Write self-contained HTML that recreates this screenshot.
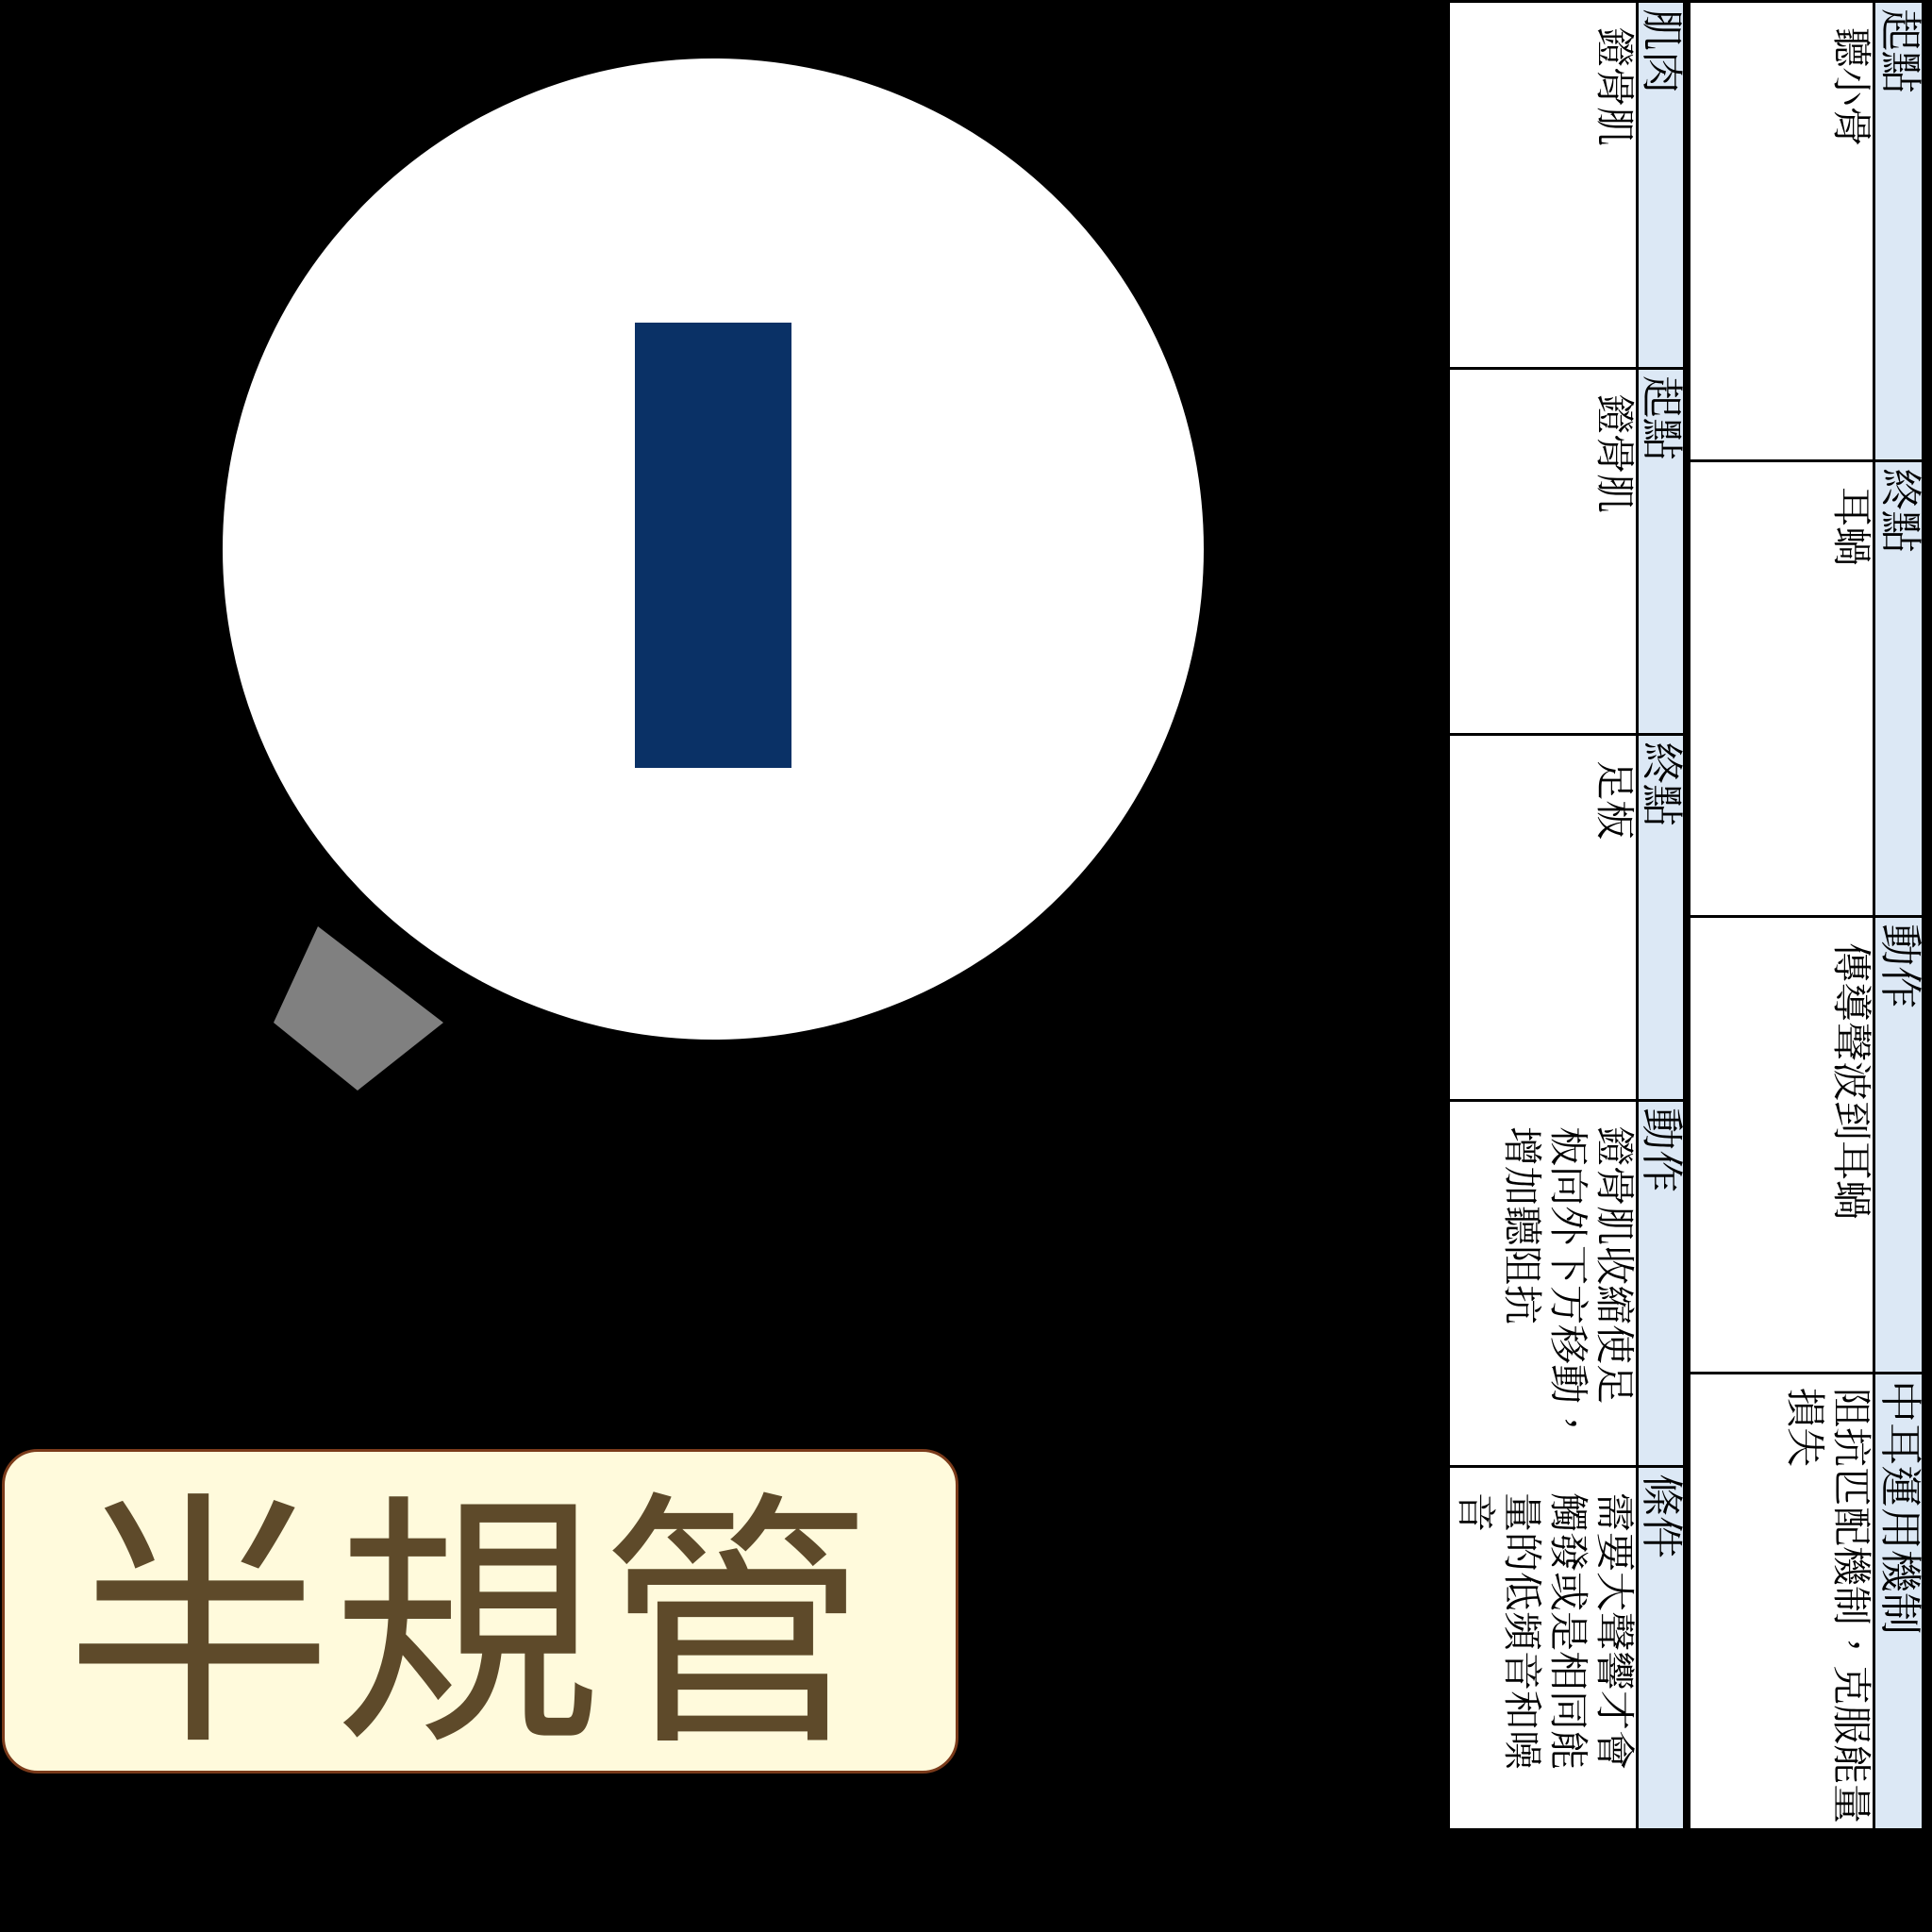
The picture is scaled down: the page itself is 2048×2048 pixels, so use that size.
<!DOCTYPE html>
<html><head><meta charset="utf-8"><style>
html,body{margin:0;padding:0;background:#000;width:2048px;height:2048px;overflow:hidden;position:relative}
.circle{position:absolute;left:236px;top:62px;width:1040px;height:1040px;border-radius:50%;background:#fff}
.bar{position:absolute;left:673px;top:342px;width:166px;height:472px;background:#0a3166}
.label{position:absolute;left:2px;top:1536px;width:1014px;height:344px;background:#fffadc;border:3px solid #7a3a1a;border-radius:38px;box-sizing:border-box}
.label span{position:absolute;left:64px;top:36px;font-family:"Liberation Sans","Noto Sans CJK TC",sans-serif;font-size:284px;line-height:300px;color:#5e4a2a;white-space:nowrap}
.tbl{position:absolute;top:0;transform-origin:0 0;transform:rotate(90deg);border-collapse:collapse;table-layout:fixed;font-family:"Liberation Serif","Noto Serif CJK TC","Noto Serif CJK SC",serif;background:#fff}
.tbl td{border:3px solid #000;vertical-align:top;padding:0 2px 0 26px;font-size:42px;line-height:49px;color:#000;white-space:nowrap;overflow:hidden}
.tbl tr.h td{background:#dce8f5;font-size:45px;line-height:46px;padding-left:6px}
</style></head><body>
<div class="circle"></div>
<div class="bar"></div>
<svg style="position:absolute;left:0;top:0" width="2048" height="2048"><polygon points="337,982 290,1084 379,1156 470,1084" fill="#808080"/></svg>
<div class="label"><span>半規管</span></div>

<table class="tbl" style="left:2040px;width:1938px;height:248px">
<colgroup><col style="width:487px"><col style="width:483px"><col style="width:484px"><col style="width:484px"></colgroup>
<tr class="h" style="height:52px"><td>起點</td><td>終點</td><td>動作</td><td>中耳運用機制</td></tr>
<tr style="height:196px"><td>聽小骨</td><td>耳蝸</td><td>傳導聲波到耳蝸</td><td style="padding-left:14px">阻抗匹配機制，克服能量<br>損失</td></tr>
</table>

<table class="tbl" style="left:1787px;width:1938px;height:250px">
<colgroup><col style="width:389px"><col style="width:388px"><col style="width:388px"><col style="width:388px"><col style="width:385px"></colgroup>
<tr class="h" style="height:50px"><td>肌肉</td><td>起點</td><td>終點</td><td>動作</td><td>條件</td></tr>
<tr style="height:200px"><td>鐙骨肌</td><td>鐙骨肌</td><td>足板</td><td>鐙骨肌收縮使足<br>板向外下方移動，<br>增加聽阻抗</td><td>需要大聲響才會<br>觸發或是相同能<br>量的低頻音和噪<br>音</td></tr>
</table>
</body></html>
